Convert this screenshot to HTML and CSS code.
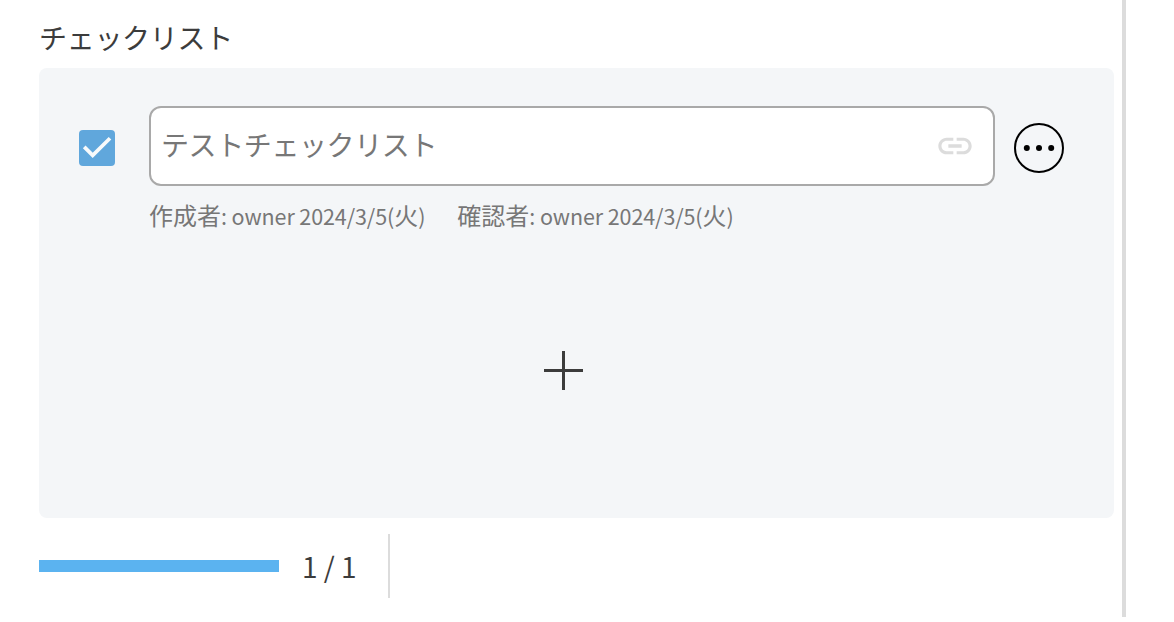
FILE: index.html
```html
<!DOCTYPE html>
<html lang="ja">
<head>
<meta charset="utf-8">
<title>チェックリスト</title>
<link rel="stylesheet" href="styles.css">
</head>
<body>
<main class="page">
  <h1 class="title">チェックリスト</h1>
  <section class="panel">
    <div class="row">
      <svg class="check" viewBox="0 0 36 36"><rect width="36" height="36" rx="4" fill="#60a7dc"/><path d="M5.200 16.900 13.700 25.400 31 8.300" fill="none" stroke="#f8fafb" stroke-width="3.700"/></svg>
      <div class="field"><span class="label">テストチェックリスト</span>
        <svg class="link" viewBox="0 0 24 24"><path fill="#dcdcdc" d="M3.900 12c0-1.710 1.390-3.100 3.100-3.100h4V7H7c-2.760 0-5 2.240-5 5s2.240 5 5 5h4v-1.900H7c-1.710 0-3.100-1.390-3.100-3.100zM8 13h8v-2H8v2zm9-6h-4v1.900h4c1.710 0 3.100 1.390 3.100 3.100s-1.390 3.100-3.100 3.100h-4V17h4c2.760 0 5-2.240 5-5s-2.240-5-5-5z"/></svg>
      </div>
      <svg class="more" viewBox="0 0 50 50"><circle cx="25" cy="25" r="24" fill="none" stroke="#000" stroke-width="2"/><circle cx="12.800" cy="25" r="3"/><circle cx="25" cy="25" r="3"/><circle cx="37.200" cy="25" r="3"/></svg>
    </div>
    <div class="meta">
      <span>作成者<span class="latin">: owner 2024/3/5(</span>火<span class="latin">)</span></span>
      <span>確認者<span class="latin">: owner 2024/3/5(</span>火<span class="latin">)</span></span>
    </div>
    <svg class="plus" viewBox="0 0 39 39"><path d="M0 19.500h39M19.500 0v39" stroke="#3c3c3c" stroke-width="3"/></svg>
  </section>
  <footer class="footer"><div class="bar"></div><div class="count">1 / 1</div></footer>
</main>
</body>
</html>
```
FILE: styles.css
```css
* { box-sizing: border-box; }
body { margin: 0; background: #fff; font-family: "Noto Sans CJK JP", sans-serif; }
svg { display: block; flex: none; }
.page { width: 1126px; height: 617px; padding: 17px 8px 0 39px; border-right: 4px solid #dcdcdc; }
.title { margin: 0; height: 51px; font-size: 28px; line-height: 40px; font-weight: 400; letter-spacing: -0.3px; color: #3c3c3c; }
.panel { width: 1075px; height: 450px; padding: 38px 40px 0; border-radius: 8px; background: #f4f6f8; }
.row { display: flex; align-items: center; height: 80px; }
.check { width: 36px; height: 36px; margin: 4px 34px 0 0; }
.field { display: flex; justify-content: space-between; align-items: center; width: 846px; height: 80px; padding: 0 18px 0 10px; border: 2px solid #a9a9a9; border-radius: 12px; background: #fff; }
.label { padding-bottom: 5px; font-size: 28px; line-height: 40px; letter-spacing: -0.4px; color: #777; }
.link { width: 40px; height: 40px; }
.more { width: 50px; height: 50px; margin: 4px 0 0 19px; }
.meta { display: flex; gap: 32px; margin: 11px 0 0 70px; height: 38px; font-size: 24px; line-height: 36px; color: #777; white-space: nowrap; }
.latin { font-size: 21.5px; letter-spacing: -0.1px; }
.plus { width: 39px; height: 39px; margin: 116px 0 0 465px; }
.footer { display: flex; align-items: center; width: 351px; height: 64px; margin-top: 16px; border-right: 2px solid #dcdcdc; }
.bar { width: 240px; height: 12px; background: #5bb3f0; }
.count { margin-left: 23px; font-size: 28px; line-height: 40px; color: #3c3c3c; white-space: nowrap; }
```
